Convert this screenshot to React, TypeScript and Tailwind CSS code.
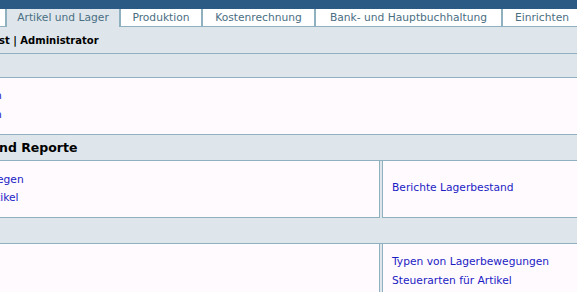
import React from 'react';

const tabs = [
  { label: 'Produktion', w: 'w-[82px]' },
  { label: 'Kostenrechnung', w: 'w-[113px]' },
  { label: 'Bank- und Hauptbuchhaltung', w: 'w-[187px]' },
  { label: 'Einrichten', w: 'w-[80px]' },
];

const Link: React.FC<{ children: React.ReactNode; className?: string }> = ({ children, className }) => (
  <a href="#" className={`block whitespace-nowrap text-[#1c1cc4] ${className ?? ''}`}>
    {children}
  </a>
);

const App: React.FC = () => {
  return (
    <div className="h-[292px] w-[577px] overflow-hidden bg-[#dee6ec] font-['DejaVu_Sans',sans-serif] text-[10.7px] text-black">
      {/* top bar */}
      <div className="h-[9px] bg-[#2b5a84]" />

      {/* tabs */}
      <nav className="flex h-[18px] whitespace-nowrap text-[10.7px] leading-[17px] text-[#4a6e82]">
        <div className="w-[5px] shrink-0 border-b border-[#8fb0bf] bg-white" />
        <div className="w-[114px] shrink-0 border-l-2 border-[#8fb0bf] bg-[#dee6ec] text-center">
          Artikel und Lager
        </div>
        {tabs.map((t) => (
          <div key={t.label} className={`${t.w} shrink-0 border-b border-l-2 border-[#8fb0bf] bg-white text-center`}>
            {t.label}
          </div>
        ))}
        <div className="flex-1 border-b border-[#8fb0bf] bg-white" />
      </nav>

      {/* user line */}
      <div className="flex h-[27px] items-center border-b border-[#8fb0bf] pt-px text-[10px] font-bold whitespace-nowrap">
        <span className="-ml-px">st | Administrator</span>
      </div>

      {/* empty band */}
      <div className="h-[24px] border-b border-[#8fb0bf]" />

      {/* first box */}
      <div className="h-[57px] border-b border-[#8fb0bf] bg-[#fffafe] pt-[8px] leading-[19px]">
        <Link className="-ml-[5px]">n</Link>
        <Link className="-ml-[5px]">n</Link>
      </div>

      {/* section header */}
      <div className="flex h-[26px] items-center border-b border-[#8fb0bf] pt-[2px] text-[12.5px] font-bold whitespace-nowrap">
        <span className="-ml-px">nd Reporte</span>
      </div>

      {/* boxes row 1 */}
      <div className="flex h-[57px] gap-[2px]">
        <div className="w-[380px] shrink-0 border-r border-b border-[#8fb0bf] bg-[#fffafe] pt-[10px] leading-[18px]">
          <Link className="-ml-[3px]">egen</Link>
          <Link className="-ml-[4px]">tikel</Link>
        </div>
        <div className="flex flex-1 items-center border-b border-l border-[#8fb0bf] bg-[#fffafe] pb-px pl-[9px]">
          <Link>Berichte Lagerbestand</Link>
        </div>
      </div>

      {/* empty section header */}
      <div className="h-[26px] border-b border-[#8fb0bf]" />

      {/* boxes row 2 */}
      <div className="flex h-[60px] gap-[2px]">
        <div className="w-[380px] shrink-0 border-r border-[#8fb0bf] bg-[#fffafe] pt-[36px] leading-[19px]">
          <Link className="-ml-[4px]">l</Link>
        </div>
        <div className="flex-1 border-l border-[#8fb0bf] bg-[#fffafe] pt-[8px] pl-[9px] leading-[19px]">
          <Link>Typen von Lagerbewegungen</Link>
          <Link>Steuerarten für Artikel</Link>
        </div>
      </div>
    </div>
  );
};

export default App;
